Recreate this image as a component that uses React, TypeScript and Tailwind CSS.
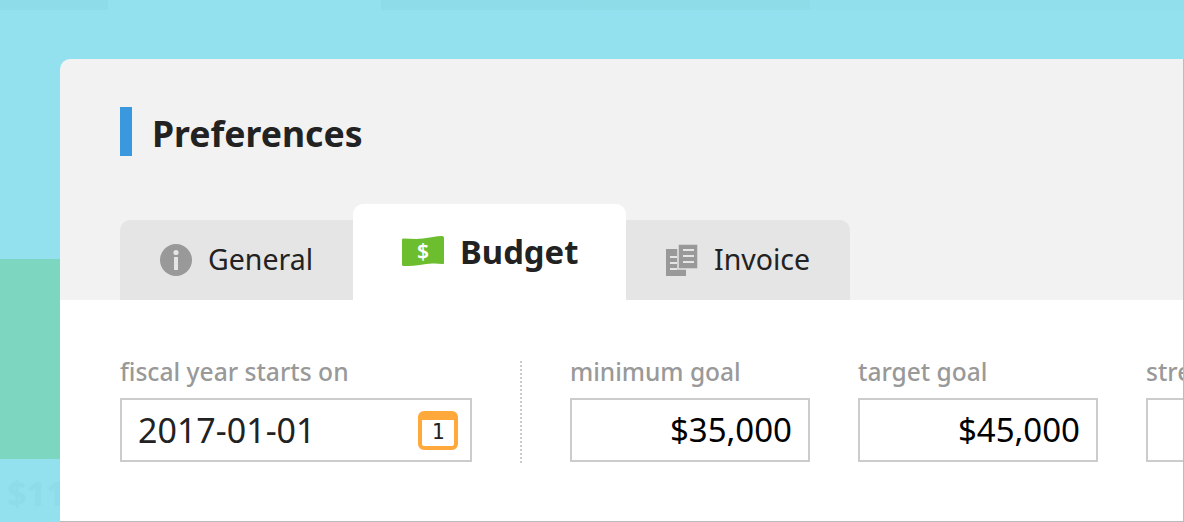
import React from 'react';

function InfoIcon() {
  return (
    <svg width="32" height="32" viewBox="0 0 32 32">
      <circle cx="16" cy="16" r="16" fill="#999999" />
      <circle cx="16" cy="8.5" r="2.6" fill="#e5e5e5" />
      <rect x="14" y="13" width="4" height="13" fill="#e5e5e5" />
    </svg>
  );
}

function MoneyIcon() {
  return (
    <svg width="42" height="30" viewBox="0 0 42 30">
      <path
        d="M0 4 C0 3 0.5 2.5 1.5 2.5 C8 2.5 14 3.5 21 2.5 C28 1.5 34 0 40 0 C41.5 0 42 1 42 2 L42 27 C42 28 41 28 40 28 C34 27 28 27.5 21 28.5 C14 29.5 8 30 2 30 C1 30 0 29.5 0 28.5 Z"
        fill="#6dbe2e"
      />
      <text
        x="21"
        y="22.5"
        textAnchor="middle"
        fill="#ffffff"
        fontSize="21"
        fontWeight="600"
        fontFamily="'Noto Sans', sans-serif"
      >
        $
      </text>
    </svg>
  );
}

function InvoiceIcon() {
  return (
    <svg width="32" height="32" viewBox="0 0 32 32">
      <rect x="0" y="5" width="20" height="27" fill="#999999" />
      <rect x="12" y="0" width="20" height="25" fill="#999999" stroke="#e5e5e5" strokeWidth="1.5" />
      <rect x="17" y="5" width="11" height="2" fill="#e5e5e5" />
      <rect x="17" y="11" width="11" height="2" fill="#e5e5e5" />
      <rect x="17" y="17" width="11" height="2" fill="#e5e5e5" />
      <rect x="4" y="12" width="7" height="2" fill="#e5e5e5" />
      <rect x="4" y="18" width="7" height="2" fill="#e5e5e5" />
      <rect x="4" y="24" width="7" height="2" fill="#e5e5e5" />
    </svg>
  );
}

function Field({ label, value, width }: { label: string; value: string; width: string }) {
  return (
    <div className={`${width} shrink-0`}>
      <div className="text-[24.5px] leading-[36px] font-medium text-[#999999] whitespace-nowrap">{label}</div>
      <div className="mt-[8px] h-[64px] border-2 border-[#cccccc] flex items-center justify-end px-[16px] text-[33px] text-black">
        {value}
      </div>
    </div>
  );
}

export default function App() {
  return (
    <div className="relative w-[1184px] h-[522px] overflow-hidden bg-[#93e0ee] font-['Noto_Sans',sans-serif]">
      {/* Faded page behind the modal */}
      <div className="absolute top-0 left-0 w-full h-[10px] flex">
        <div className="w-[108px] bg-[#8edbe9]" />
        <div className="w-[273px] bg-[#93e0ee]" />
        <div className="w-[204px] bg-[#8edbe9]" />
        <div className="w-[225px] bg-[#8fdce9]" />
        <div className="flex-1 bg-[#91dfec]" />
      </div>
      <div className="absolute left-0 top-[259px] w-[60px] h-[200px] bg-[#7dd6c0]" />
      <div className="absolute left-[7px] top-[470px] text-[34px] leading-[46px] font-bold text-[#8edbe9]">$11</div>

      {/* Modal */}
      <div className="relative ml-[60px] pt-[59px]">
        <div className="h-[463px] bg-[#f2f2f2] rounded-tl-[10px] border-r border-b border-[#bbbbbb] flex flex-col">
          <div className="pl-[60px] pt-[48px] flex items-center h-[97px]">
            <div className="w-[12px] h-[49px] bg-[#3998de]" />
            <h1 className="ml-[20px] pt-[3px] text-[35.6px] leading-[49px] font-bold text-[#222222]">Preferences</h1>
          </div>

          <div className="pl-[60px] mt-[48px] flex items-end h-[96px]">
            <div className="w-[233px] h-[80px] bg-[#e5e5e5] rounded-tl-[10px] flex items-center pl-[40px] gap-[16px] text-[28.5px] text-[#222222]">
              <InfoIcon />
              <span className="-translate-y-px">General</span>
            </div>
            <div className="w-[273px] h-[96px] bg-white rounded-t-[10px] flex items-center pl-[49px] pb-[2px] gap-[16px] text-[32.8px] font-bold text-[#222222]">
              <MoneyIcon />
              <span className="translate-y-px">Budget</span>
            </div>
            <div className="w-[224px] h-[80px] bg-[#e5e5e5] rounded-tr-[10px] flex items-center pl-[40px] gap-[16px] text-[28.5px] text-[#222222]">
              <InvoiceIcon />
              <span className="-translate-y-px">Invoice</span>
            </div>
          </div>

          <div className="flex-1 bg-white pl-[60px] pt-[54px] flex items-start overflow-hidden">
            <div className="w-[352px] shrink-0">
              <div className="text-[24.6px] leading-[36px] font-medium text-[#999999] whitespace-nowrap">fiscal year starts on</div>
              <div className="mt-[8px] h-[64px] border-2 border-[#cccccc] flex items-center justify-between pl-[16px] pr-[12px] text-[34px] text-[#222222]">
                <span>2017-01-01</span>
                <div className="w-[40px] h-[39px] rounded-[6px] border-[4px] border-t-[9px] border-[#ffa83c] bg-white flex items-center justify-center text-[21px] leading-none font-medium font-['DejaVu_Sans_Mono',monospace] text-[#222222]">
                  1
                </div>
              </div>
            </div>
            <div className="mx-[48px] mt-[7px] h-[102px] border-l-2 border-dotted border-[#cccccc]" />
            <div className="flex gap-[48px]">
              <Field label="minimum goal" value="$35,000" width="w-[240px]" />
              <Field label="target goal" value="$45,000" width="w-[240px]" />
              <Field label="stretch goal" value="$60,000" width="w-[240px]" />
            </div>
          </div>
        </div>
      </div>
    </div>
  );
}
